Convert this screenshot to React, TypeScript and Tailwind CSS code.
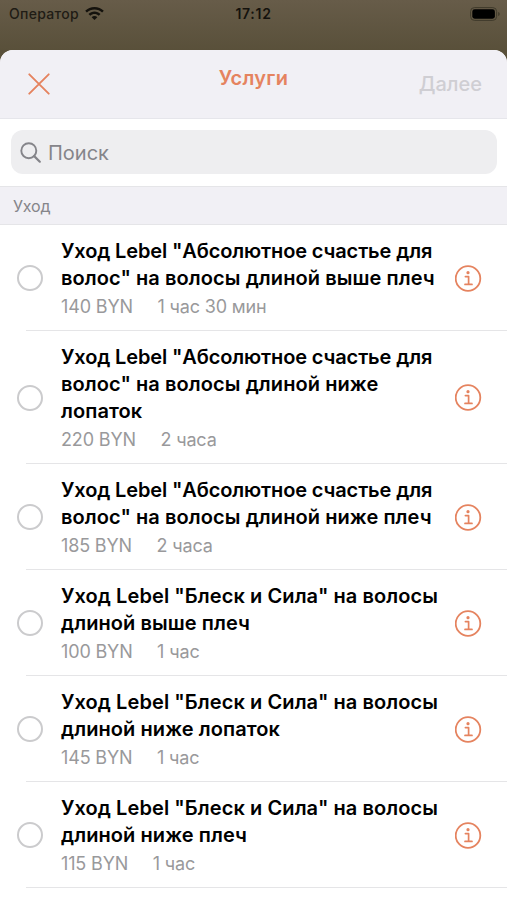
import { useState } from "react";

const services = [
  {
    title: ['Уход Lebel "Абсолютное счастье для', 'волос" на волосы длиной выше плеч'],
    price: "140 BYN",
    duration: "1 час 30 мин",
  },
  {
    title: ['Уход Lebel "Абсолютное счастье для', 'волос" на волосы длиной ниже', "лопаток"],
    price: "220 BYN",
    duration: "2 часа",
  },
  {
    title: ['Уход Lebel "Абсолютное счастье для', 'волос" на волосы длиной ниже плеч'],
    price: "185 BYN",
    duration: "2 часа",
  },
  {
    title: ['Уход Lebel "Блеск и Сила" на волосы', "длиной выше плеч"],
    price: "100 BYN",
    duration: "1 час",
  },
  {
    title: ['Уход Lebel "Блеск и Сила" на волосы', "длиной ниже лопаток"],
    price: "145 BYN",
    duration: "1 час",
  },
  {
    title: ['Уход Lebel "Блеск и Сила" на волосы', "длиной ниже плеч"],
    price: "115 BYN",
    duration: "1 час",
  },
];

export default function App() {
  const [selected, setSelected] = useState<number | null>(null);

  return (
    <div className="flex h-[900px] w-full flex-col overflow-hidden bg-linear-to-b from-[#675c49] to-[#59503a] to-[50px] font-['Inter',sans-serif]">
      <StatusBar />

      <div className="flex flex-1 flex-col overflow-hidden rounded-t-[13px] bg-white">
        <header className="grid h-[69px] shrink-0 grid-cols-3 border-b border-[#e6e6eb] bg-[#f1f0f5]">
          <button type="button" aria-label="Закрыть" className="mt-[23px] ml-[28px] h-[22px] w-[22px]">
            <svg viewBox="0 0 22 22" fill="none" stroke="#e5835f" strokeWidth="1.9" strokeLinecap="round">
              <path d="M1.3 1.3 20.7 20.7M20.7 1.3 1.3 20.7" />
            </svg>
          </button>
          <h1 className="mt-[14px] text-center text-[20px] leading-[28px] font-semibold tracking-[0.3px] text-[#e5835f]">
            Услуги
          </h1>
          <button
            type="button"
            disabled
            className="mt-[20px] mr-[25px] h-[28px] text-right text-[20px] leading-[28px] font-medium text-[#cfced3]"
          >
            Далее
          </button>
        </header>

        <div className="shrink-0 pt-[11px] pr-[10px] pb-[12px] pl-[11px]">
          <label className="flex h-[44px] items-center rounded-[12px] bg-[#eeeef0] pl-[9px]">
            <svg className="h-[21px] w-[21px] shrink-0" viewBox="0 0 21 21" fill="none" stroke="#85858a" strokeWidth="1.9">
              <circle cx="8.8" cy="8.7" r="7.5" />
              <path d="m14.2 14.1 5.6 5.6" strokeWidth="2.2" strokeLinecap="round" />
            </svg>
            <input
              className="ml-[7px] w-full bg-transparent pt-[2px] text-[20px] outline-none placeholder:text-[#85858a]"
              placeholder="Поиск"
            />
          </label>
        </div>

        <div className="h-[39px] shrink-0 border-y border-[#e5e5e8] bg-[#f1f0f5] pl-[13px] text-[16px] leading-[38px] tracking-[-0.2px] text-[#85858a]">
          Уход
        </div>

        <ul>
          {services.map((service, i) => (
            <li key={i} className="relative flex items-center pr-[25px] pl-[17px]">
              <button
                type="button"
                aria-label="Выбрать"
                onClick={() => setSelected(selected === i ? null : i)}
                className={`h-[26px] w-[26px] shrink-0 rounded-full border-2 ${
                  selected === i ? "border-[#e5835f] bg-[#e5835f]" : "border-[#cbcbcd]"
                }`}
              />
              <div className="ml-[18px] flex-1 pt-[13px] pb-[12px]">
                <h2 className="text-[20px] leading-[27px] font-semibold whitespace-nowrap text-black">
                  {service.title.map((line) => (
                    <span
                      key={line}
                      className={`block ${line.includes("Абсолютное") ? "tracking-[-0.13px]" : "tracking-[0.08px]"}`}
                    >
                      {line}
                    </span>
                  ))}
                </h2>
                <div className="mt-[3px] flex h-[24px] gap-[24.5px] text-[18px] leading-[24px] tracking-[-0.15px] text-[#99999b]">
                  <span>{service.price}</span>
                  <span>{service.duration}</span>
                </div>
              </div>
              <button type="button" aria-label="Подробнее" className="h-[27px] w-[27px] shrink-0">
                <InfoIcon />
              </button>
              <div className="absolute right-0 bottom-0 left-[26px] h-px bg-[#e5e5e7]" />
            </li>
          ))}
        </ul>
      </div>
    </div>
  );
}

function StatusBar() {
  return (
    <div className="grid h-[50px] shrink-0 grid-cols-3 text-[#14120d]">
      <div className="flex h-[27px] items-center pl-[9px]">
        <span className="text-[14px] font-medium tracking-[0.3px] text-[#1f1c15]">Оператор</span>
        <svg className="ml-[6px] h-[14px] w-[19px]" viewBox="0 0 19 14" fill="currentColor">
          <path d="M9.5 0C5.9 0 2.6 1.4.2 3.7l1.7 1.8C3.9 3.6 6.6 2.5 9.5 2.5s5.6 1.1 7.600 3l1.7-1.8C16.4 1.4 13.1 0 9.5 0Z" />
          <path d="M9.5 4.6c-2.300 0-4.400.9-6 2.400l1.800 1.800c1.100-1.100 2.600-1.700 4.200-1.700s3.100.6 4.200 1.700L15.500 7c-1.600-1.500-3.700-2.400-6-2.400Z" />
          <path d="M9.5 9c-1.100 0-2.100.4-2.800 1.200l2.800 2.900 2.800-2.900C11.600 9.400 10.600 9 9.500 9Z" />
        </svg>
      </div>
      <div className="h-[28px] text-center text-[14px] leading-[28px] font-semibold tracking-[0.7px]">17:12</div>
      <div className="flex h-[27px] items-center justify-end pr-[6px]">
        <svg className="h-[14px] w-[31px]" viewBox="0 0 31 14">
          <rect x="0.6" y="0.6" width="26" height="12.8" rx="3.8" fill="none" stroke="#3f3a2b" strokeWidth="1" />
          <rect x="2.3" y="2.3" width="22.6" height="9.4" rx="2.4" fill="#000" />
          <path d="M28.2 5v4c.9-.4 1.5-1.100 1.5-2s-.6-1.600-1.500-2Z" fill="#3f3a2b" />
        </svg>
      </div>
    </div>
  );
}

function InfoIcon() {
  return (
    <svg viewBox="0 0 27 27" fill="none" stroke="#e5835f">
      <circle cx="13" cy="13.5" r="12.3" strokeWidth="1.8" />
      <circle cx="13" cy="7.7" r="1.6" fill="#e5835f" stroke="none" />
      <path d="M10.400 11.600h3.200v7.700M10 19.400h7" strokeWidth="1.7" strokeLinecap="round" strokeLinejoin="round" />
    </svg>
  );
}
